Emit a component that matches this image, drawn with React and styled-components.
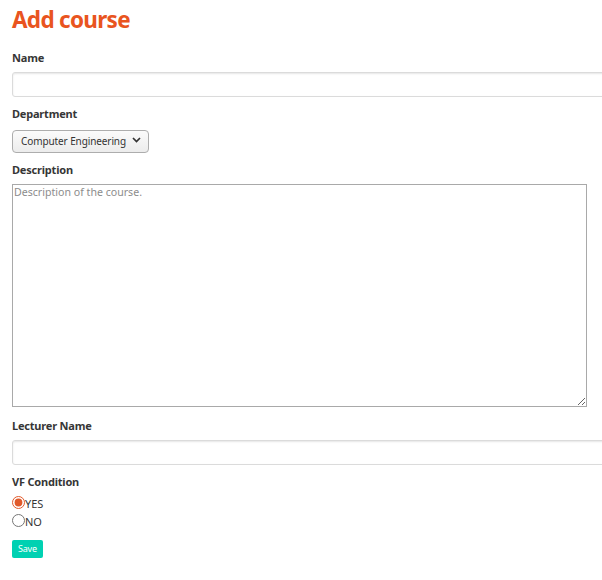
import React, { useState } from 'react';
import styled, { createGlobalStyle } from 'styled-components';

const GlobalStyle = createGlobalStyle`
  html, body {
    margin: 0;
    padding: 0;
    background: #fff;
    overflow-x: hidden;
  }
  body {
    font-family: "Noto Sans", "DejaVu Sans", sans-serif;
    color: #363636;
  }
`;

const Page = styled.form`
  padding: 4px 12px 12px 12px;
  width: 620px;
`;

const Title = styled.h1`
  margin: 0 0 15px 0;
  font-size: 22.5px;
  line-height: 32px;
  letter-spacing: -0.7px;
  font-weight: 700;
  color: #e95420;
`;

const Field = styled.div`
  margin-bottom: ${props => props.gap || 10}px;
`;

const Label = styled.label`
  display: block;
  font-size: 11px;
  line-height: 14px;
  font-weight: 700;
  letter-spacing: -0.2px;
  color: #363636;
  margin-bottom: ${props => props.gap || 7}px;
`;

const TextInput = styled.input`
  display: block;
  box-sizing: border-box;
  width: 100%;
  height: 25px;
  border: 1px solid #dbdbdb;
  border-radius: 3px;
  box-shadow: inset 0 1px 2px rgba(10, 10, 10, 0.1);
  background: #fff;
  font-family: inherit;
  font-size: 12px;
  padding: 0 6px;
  outline: none;
`;

const SelectWrap = styled.div`
  position: relative;
  display: inline-block;
`;

const Select = styled.select`
  appearance: none;
  box-sizing: border-box;
  height: 23px;
  width: 137px;
  padding: 0 20px 0 8px;
  border: 1px solid #adadad;
  border-radius: 4px;
  background: linear-gradient(#fbfbfb, #ececec);
  font-family: inherit;
  font-size: 10px;
  letter-spacing: -0.1px;
  color: #333;
  outline: none;
`;

const Chevron = styled.svg`
  position: absolute;
  right: 8px;
  top: 9px;
  pointer-events: none;
`;

const TextArea = styled.textarea`
  display: block;
  box-sizing: border-box;
  width: 575px;
  height: 223px;
  border: 1px solid #a9a9a9;
  border-radius: 0;
  padding: 0 1px;
  font-family: inherit;
  font-size: 10.6px;
  line-height: 14px;
  color: #333;
  outline: none;
  &::placeholder {
    color: #8c8c8c;
  }
`;

const RadioGroup = styled.div`
  display: flex;
  flex-direction: column;
  gap: 2px;
  margin-bottom: 10px;
`;

const RadioRow = styled.label`
  display: flex;
  align-items: flex-end;
  font-size: 11px;
  line-height: 16px;
  color: #363636;
`;

const Radio = styled.input`
  margin: 0;
  width: 13px;
  height: 13px;
  accent-color: #e0592a;
  position: relative;
  top: -3px;
`;

const SaveButton = styled.button`
  display: block;
  height: 18px;
  padding: 0 6px;
  border: none;
  border-radius: 2px;
  background: #00d1b2;
  color: #fff;
  font-family: inherit;
  font-size: 9px;
  letter-spacing: -0.2px;
  cursor: pointer;
`;

const App = () => {
  const [vf, setVf] = useState('yes');

  return (
    <>
      <GlobalStyle />
      <Page onSubmit={e => e.preventDefault()}>
        <Title>Add course</Title>
        <Field>
          <Label>Name</Label>
          <TextInput type="text" />
        </Field>
        <Field gap={10}>
          <Label>Department</Label>
          <SelectWrap>
            <Select defaultValue="ce">
              <option value="ce">Computer Engineering</option>
            </Select>
            <Chevron width="9" height="6" viewBox="0 0 9 6">
              <path d="M1 1l3.5 3.5L8 1" fill="none" stroke="#333" strokeWidth="1.7" />
            </Chevron>
          </SelectWrap>
        </Field>
        <Field gap={12}>
          <Label gap={7}>Description</Label>
          <TextArea placeholder="Description of the course." />
        </Field>
        <Field gap={10}>
          <Label>Lecturer Name</Label>
          <TextInput type="text" />
        </Field>
        <Label>VF Condition</Label>
        <RadioGroup>
          <RadioRow>
            <Radio type="radio" name="vf" checked={vf === 'yes'} onChange={() => setVf('yes')} />
            YES
          </RadioRow>
          <RadioRow>
            <Radio type="radio" name="vf" checked={vf === 'no'} onChange={() => setVf('no')} />
            NO
          </RadioRow>
        </RadioGroup>
        <SaveButton type="submit">Save</SaveButton>
      </Page>
    </>
  );
};

export default App;
